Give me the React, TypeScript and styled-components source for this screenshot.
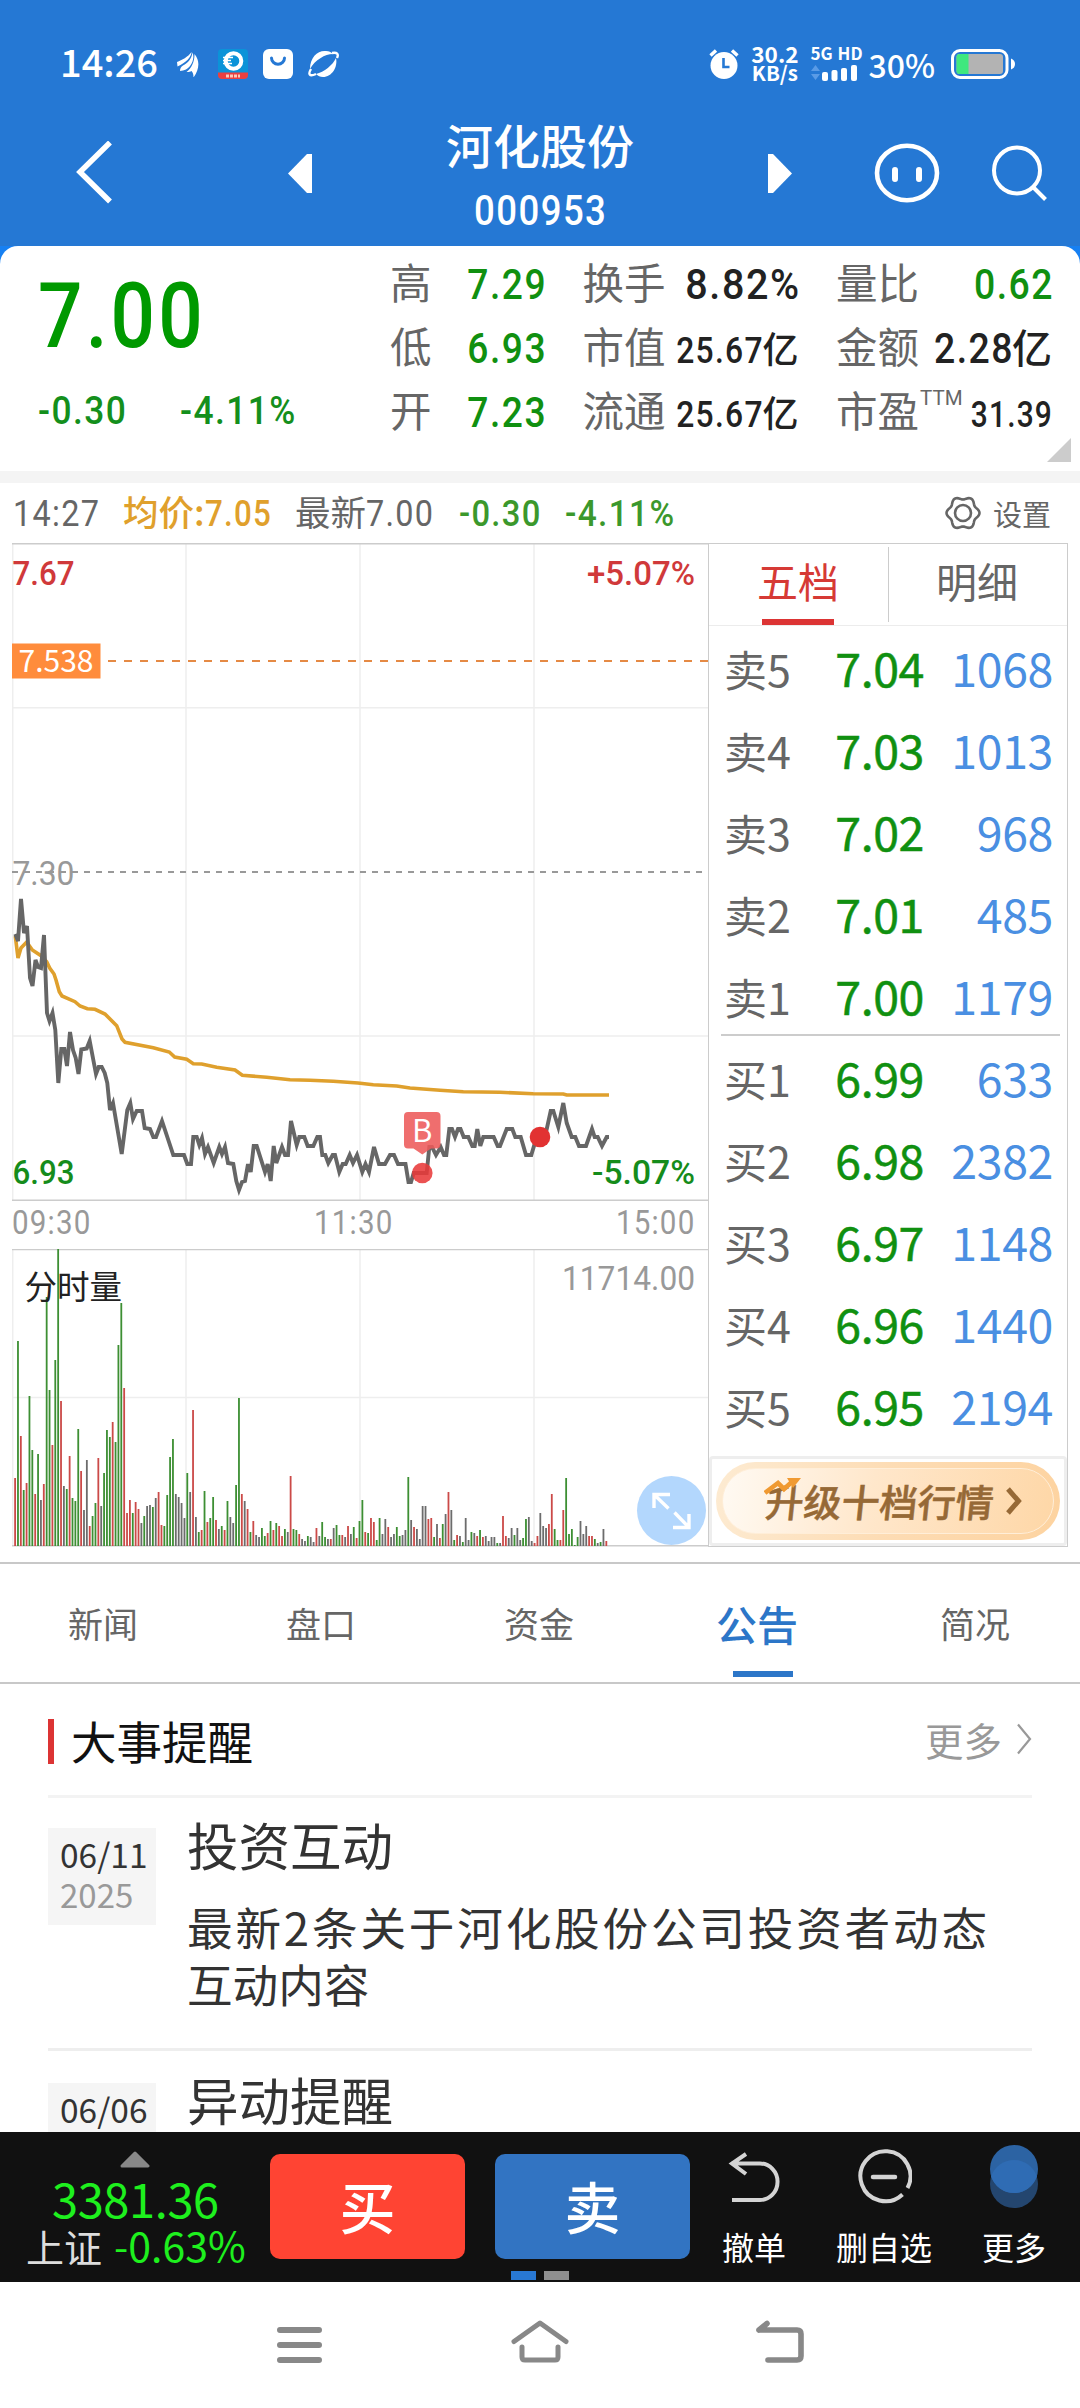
import React from "react";
import styled, { createGlobalStyle, css } from "styled-components";

const CJK = `"Noto Sans CJK SC", "Noto Sans", sans-serif`;
const DIN = `Roboto, "Noto Sans CJK SC", sans-serif`;

const c = {
  blue: "#2578d4",
  green: "#109010",
  red: "#d63a35",
  gray: "#666",
  light: "#999",
  line: "#cccccc",
  ink: "#222",
};

const GlobalStyle = createGlobalStyle`
  * { box-sizing: border-box; }
  html, body { margin: 0; padding: 0; background: #fff; }
  body { font-family: ${CJK}; color: ${c.ink}; width: 1080px; overflow: hidden; }
  svg { display: block; flex: none; }
`;

const Screen = styled.div`
  width: 1080px;
  height: 2408px;
  display: flex;
  flex-direction: column;
  overflow: hidden;
  background: #fff;
`;

/* Narrow DIN-like figures */
const Num = styled.span<{ $size: number; $from?: "left" | "right" | "center"; $w?: number; $k?: number }>`
  display: inline-block;
  font-family: ${DIN};
  font-size: ${(p) => p.$size}px;
  font-weight: ${(p) => p.$w ?? 500};
  letter-spacing: 0.04em;
  margin-right: -0.04em;
  margin-left: ${(p) => (p.$from === "right" ? "-0.3em" : 0)};
  white-space: nowrap;
  transform: scaleX(${(p) => p.$k ?? 0.87});
  transform-origin: ${(p) => p.$from ?? "left"} center;
`;

/* ---------- header ---------- */

const Header = styled.header`
  height: 246px;
  flex: none;
  background: ${c.blue};
  color: #fff;
`;

const StatusBar = styled.div`
  height: 92px;
  padding: 36px 64px 0 60px;
  display: flex;
  align-items: center;
  justify-content: space-between;
`;

const StatusGroup = styled.div<{ $gap: number }>`
  display: flex;
  align-items: center;
  gap: ${(p) => p.$gap}px;
`;

const Clock = styled.span`
  font-size: 38px;
  font-weight: 500;
  line-height: 50px;
  width: 102px;
  margin-top: -6px;
`;

const Speed = styled.div`
  display: flex;
  flex-direction: column;
  align-items: center;
  font-weight: 700;
  font-size: 22.5px;
  line-height: 19px;
  margin-top: -2px;
  span + span { font-size: 20.5px; }
`;

const Network = styled.div`
  display: flex;
  flex-direction: column;
  gap: 4px;
  font-size: 17px;
  font-weight: 700;
  line-height: 15px;
  word-spacing: 1px;
  white-space: nowrap;
  width: 48px;
  margin-top: -2px;
`;

const Percent = styled.span`
  font-size: 32px;
  font-weight: 500;
  line-height: 40px;
  margin: 0 16px 0 -2px;
`;

const TitleBar = styled.nav`
  height: 154px;
  padding: 8px 33px 0 76px;
  display: flex;
  align-items: center;
`;

const Title = styled.div`
  width: 456px;
  align-self: flex-start;
  margin-top: 14px;
  display: flex;
  flex-direction: column;
  align-items: center;
  gap: 12px;
`;

const StockName = styled.h1`
  margin: 0;
  font-size: 47px;
  font-weight: 500;
  line-height: 60px;
`;

const Code = styled.div`
  line-height: 50px;
`;

const Space = styled.i<{ $w: number }>`
  flex: none;
  width: ${(p) => p.$w}px;
`;

/* ---------- quote ---------- */

const QuoteBack = styled.div`
  background: #1780f2;
  flex: none;
`;

const Quote = styled.section`
  position: relative;
  height: 225px;
  background: #fff;
  border-radius: 18px 18px 0 0;
  display: flex;
`;

const PriceBlock = styled.div`
  width: 390px;
  flex: none;
  padding: 21px 0 0 38px;
  color: #009900;
`;

const Price = styled.div`
  line-height: 100px;
  height: 100px;
`;

const Change = styled.div`
  margin-top: 19px;
  line-height: 50px;
  display: grid;
  grid-template-columns: 142px 160px;
  color: #148f1c;
`;

const Stats = styled.div`
  padding-top: 3px;
  display: grid;
  grid-template-columns: 155px 216px 216px;
  grid-auto-rows: 64px;
  column-gap: 37.5px;
`;

const Stat = styled.div<{ $tone?: string }>`
  display: flex;
  justify-content: space-between;
  align-items: baseline;
  line-height: 64px;
  white-space: nowrap;
  color: ${(p) => p.$tone ?? c.ink};
`;

const StatLabel = styled.span`
  font-size: 41.5px;
  color: ${c.gray};
`;

const Sup = styled.sup`
  font-family: ${DIN};
  font-size: 20.5px;
  line-height: 1;
  vertical-align: 22px;
  margin-left: 1px;
`;

const StatValue = styled.span<{ $unit?: number }>`
  font-size: ${(p) => p.$unit ?? 40}px;
  font-weight: 500;
`;

const Corner = styled.i`
  position: absolute;
  right: 9px;
  bottom: 9px;
  border: 12px solid transparent;
  border-right-color: #ccc;
  border-bottom-color: #ccc;
`;

const Band = styled.div`
  height: 12px;
  flex: none;
  background: #f4f4f4;
`;

/* ---------- info line ---------- */

const Info = styled.div`
  height: 60px;
  flex: none;
  padding: 0 29px 0 13px;
  display: grid;
  grid-template-columns: 110px 172px 164px 106px 380px 1fr;
  line-height: 55px;
  font-size: 35.5px;
  white-space: nowrap;
  color: ${c.gray};
`;

const InfoCell = styled.span<{ $tone?: string; $bold?: boolean }>`
  color: ${(p) => p.$tone ?? "inherit"};
  font-weight: ${(p) => (p.$bold ? 500 : 400)};
`;

const Settings = styled.span`
  display: flex;
  align-items: center;
  justify-content: space-between;
  height: 60px;
  font-size: 29px;
  line-height: 56px;
`;

/* ---------- market ---------- */

const Market = styled.section`
  flex: none;
  height: 1019px;
  padding-left: 12px;
  display: flex;
  align-items: flex-start;
`;

const Charts = styled.div`
  position: relative;
  width: 696px;
  flex: none;
`;

const TimeAxis = styled.div`
  height: 48px;
  padding: 0 14px 0 0;
  display: grid;
  grid-template-columns: 1fr 1fr 1fr;
  line-height: 42px;
  color: ${c.light};
  span:nth-child(2) { text-align: center; }
  span:nth-child(3) { text-align: right; }
`;

const Expand = styled.button`
  position: absolute;
  right: 2px;
  bottom: 2px;
  width: 69px;
  height: 69px;
  padding: 0;
  border: 0;
  border-radius: 50%;
  background: #b3d7fd;
`;

const Book = styled.aside`
  width: 360px;
  height: 1004px;
  border: 1px solid ${c.line};
  display: flex;
  flex-direction: column;
`;

const BookTabs = styled.div`
  height: 82px;
  flex: none;
  display: grid;
  grid-template-columns: 180px 178px;
  border-bottom: 1px solid #ececec;
`;

const BookTab = styled.div<{ $active?: boolean }>`
  position: relative;
  display: flex;
  justify-content: center;
  font-size: 41px;
  line-height: 73px;
  padding-right: 2px;
  color: ${(p) => (p.$active ? c.red : c.gray)};
  ${(p) =>
    p.$active &&
    css`
      &::before {
        content: "";
        position: absolute;
        left: 53px;
        bottom: 0;
        width: 72px;
        height: 6px;
        background: #dc3434;
      }
      &::after {
        content: "";
        position: absolute;
        right: 0;
        top: 3px;
        width: 1px;
        height: 75px;
        background: ${c.line};
      }
    `}
`;

const Level = styled.div`
  height: 82px;
  padding: 0 14px 0 15px;
  display: grid;
  grid-template-columns: 70px 130px 1fr;
  align-items: baseline;
  line-height: 82px;
  font-size: 43px;
  color: ${c.gray};
`;

const LevelNum = styled.span<{ $tone: string; $bold?: boolean }>`
  text-align: right;
  font-size: 46.5px;
  font-weight: 400;
  letter-spacing: -0.4px;
  color: ${(p) => p.$tone};
  -webkit-text-stroke: ${(p) => (p.$bold ? "0.5px currentColor" : "0")};
`;

const Side = styled.div`
  position: relative;
  & + &::before {
    content: "";
    position: absolute;
    left: 12px;
    right: 7px;
    top: -2px;
    height: 2px;
    background: ${c.line};
  }
`;

const UpgradeBox = styled.div`
  margin-top: auto;
  height: 90px;
  border: 3px solid #eeeeee;
  border-radius: 4px;
  padding: 3px 4px 3px 4px;
`;

const Upgrade = styled.div`
  position: relative;
  height: 78px;
  border-radius: 39px;
  background: linear-gradient(100deg, #fdebd2, #fddcb4 50%, #fdd3a0);
  padding: 6px;
`;

const UpgradeInner = styled.div`
  height: 66px;
  border: 1.5px solid #ffeed8;
  border-radius: 33px;
  background: linear-gradient(100deg, #fffaf3, #ffe7cb 45%, #fed7a7);
  display: flex;
  align-items: center;
  padding-left: 43px;
  gap: 12px;
  color: #966936;
`;

const UpgradeText = styled.span`
  font-size: 38px;
  font-weight: 500;
  -webkit-text-stroke: 0.5px currentColor;
  line-height: 60px;
  margin-top: 0;
  transform: skewX(-6deg);
`;

const Spark = styled.svg`
  position: absolute;
  left: 48px;
  top: 15px;
`;

/* ---------- tabs ---------- */

const Tabs = styled.nav`
  flex: none;
  height: 122px;
  border-top: 2px solid #c8c8c8;
  border-bottom: 2px solid #c8c8c8;
  display: grid;
  grid-template-columns: repeat(5, 218px);
  margin-left: -6px;
`;

const Tab = styled.div<{ $active?: boolean }>`
  position: relative;
  text-align: center;
  font-size: ${(p) => (p.$active ? 41 : 35)}px;
  font-weight: ${(p) => (p.$active ? 500 : 400)};
  line-height: 118px;
  color: ${(p) => (p.$active ? "#2c76c8" : c.gray)};
  ${(p) =>
    p.$active &&
    css`
      &::after {
        content: "";
        position: absolute;
        left: 85px;
        bottom: 5px;
        width: 60px;
        height: 6px;
        background: #2c76c8;
      }
    `}
`;

/* ---------- notices ---------- */

const Notices = styled.section`
  flex: none;
  height: 448px;
  overflow: hidden;
  padding: 0 48px;
`;

const NoticeHead = styled.div`
  height: 114px;
  border-bottom: 3px solid #f3f3f3;
  display: flex;
  align-items: center;
`;

const RedBar = styled.i`
  width: 6px;
  height: 45px;
  margin-top: 4px;
  background: #dc3434;
`;

const HeadTitle = styled.h2`
  margin: 0 auto 0 17px;
  font-size: 45.5px;
  font-weight: 400;
  line-height: 110px;
  color: #111;
`;

const More = styled.span`
  display: flex;
  align-items: center;
  gap: 14px;
  font-size: 38.5px;
  line-height: 108px;
  margin-top: -2px;
  color: ${c.light};
`;

const Notice = styled.article`
  height: 252px;
  padding-top: 30px;
  display: flex;
  & + & {
    border-top: 3px solid #eeeeee;
    height: 255px;
    padding-top: 32px;
    margin-top: -2px;
  }
`;

const DateBox = styled.div`
  width: 108px;
  height: 97px;
  flex: none;
  padding: 5px 0 0 12px;
  background: #f5f5f5;
  font-size: 33.5px;
  line-height: 41px;
  color: #333;
  white-space: nowrap;
`;

const Year = styled.div`
  font-size: 33px;
  line-height: 40px;
  color: ${c.light};
`;

const NoticeBody = styled.div`
  margin-left: 31px;
  width: 800px;
  color: #333;
`;

const NoticeTitle = styled.h3`
  margin: -14px 0 0;
  font-size: 51.5px;
  font-weight: 400;
  line-height: 60px;
`;

const NoticeText = styled.p`
  margin: 24px 0 0;
  font-size: 45.6px;
  line-height: 56.5px;
  text-align: justify;
`;

/* ---------- trade bar ---------- */

const TradeBar = styled.footer`
  position: relative;
  flex: none;
  height: 150px;
  background: #111;
  display: flex;
`;

const Index = styled.div`
  width: 270px;
  padding: 19px 0 0 26px;
  white-space: nowrap;
  svg { margin-left: 94px; }
`;

const IndexValue = styled.div`
  margin: 5px 0 0 26px;
  font-size: 47px;
  line-height: 50px;
  height: 50px;
  letter-spacing: -0.4px;
  color: #1ef01e;
`;

const IndexChange = styled.div`
  display: flex;
  align-items: baseline;
  font-size: 38px;
  line-height: 42px;
  color: #ddd;
  b {
    margin-left: 12px;
    font-size: 41px;
    font-weight: 400;
    color: #1ef01e;
  }
`;

const TradeButton = styled.button<{ $bg: string }>`
  width: 195px;
  height: 105px;
  margin: 22px 30px 0 0;
  padding: 0 0 4px;
  border: 0;
  border-radius: 10px;
  background: ${(p) => p.$bg};
  color: #fff;
  font: 500 56px/96px ${CJK};
`;

const Actions = styled.div`
  display: grid;
  grid-template-columns: 130px 130px 130px;
  margin-left: -31px;
`;

const Action = styled.div`
  padding-top: 12px;
  display: flex;
  flex-direction: column;
  align-items: center;
  font-size: 32px;
  line-height: 44px;
  color: #fff;
  span { margin-top: 15px; }
`;

const Pager = styled.div`
  position: absolute;
  left: 511px;
  bottom: 2px;
  display: flex;
  gap: 8px;
  i { width: 25px; height: 9px; background: #8f8f8f; }
  i:first-child { background: #2878d4; }
`;

const SystemNav = styled.div`
  flex: 1;
  display: flex;
  justify-content: center;
  align-items: flex-start;
  padding-top: 34px;
  gap: 176px;
`;

/* ---------- data ---------- */

const pricePoints =
  "15.3,934 18,941 21,899 24,933 27,926 30,978 32.5,986 35.5,960 38,967 41,968 44,935 47,1013 49.5,1021 52.5,1013 55.3,1030 58.3,1083 61.3,1049 64.3,1049 67,1066 70,1032 73,1050 75.7,1058 78.5,1074 81.3,1049.5 86.7,1048.5 89.7,1041 96,1074 98.7,1067 101.7,1067 104.7,1073 107.3,1083 110,1110 113,1103 121.7,1154 127.3,1110 130.3,1103 133,1119 136.7,1111 142,1111 144.7,1128 150,1129 153.3,1137 156,1137 162,1121 173.3,1155 184,1155 187.3,1164 191,1164 193.3,1137 196.7,1137 199.3,1145 202,1138 205,1154 208,1147 213.7,1163 219.3,1147 222,1154 225,1147 228,1163 233.3,1164 236.3,1181 239,1190 242,1182 245,1181 248,1164 250.7,1172 253.7,1146 256.7,1146 265,1172 267.7,1164 270.7,1181 273.7,1146 276.3,1163 282,1147 285,1155 288,1155 291,1121 296.7,1145 299.3,1137 304.3,1137 307.7,1146 313.3,1146 317.3,1137 320,1137 322.3,1155 325.3,1155 328.3,1163 332.7,1155 335,1155 339.3,1172 342.7,1164 345.7,1164 349.7,1155 353,1163 357,1155 362.3,1172 365.5,1164 369,1172 374,1147 379,1164 385,1164 390,1155 394,1155 398,1164 405.5,1164 408.5,1182 411,1182 413.7,1173 426.7,1173 429.3,1147 432,1147 436,1155 440.7,1147 444,1155 446.3,1155 449.3,1129 452,1129 455,1137 458,1129 460.5,1129 463.7,1137 468.3,1137 472.3,1146 474.7,1146 477.3,1129 480.3,1146 483.3,1137 493.7,1137 497.7,1146 500,1146 506.7,1129 512.3,1129 515.3,1137 520.7,1137 526,1155 531.3,1155 536.7,1137 545,1137 550.7,1111 553.3,1111 558.3,1127 563.3,1103 566.7,1123 571.7,1137 575.3,1137 579,1146 586,1146 592,1129 594.7,1137 597.7,1137 602,1146 606.7,1137 609,1137";

const averagePoints =
  "15.3,936 18,958 21,948 26.7,942 32.3,950 41,955.7 46.7,961.7 49.7,968 54,974 56,980 59.3,991.7 62,996 75,1001.7 80,1006 87.3,1008.7 95,1009.3 105,1014 116.7,1025.7 122,1039 125,1042.3 153.3,1047.7 169.3,1052 174.7,1057 186.7,1059.3 193.3,1063.7 201.7,1064 216.7,1067.3 235,1070 242.3,1075.3 266.7,1077.3 290,1079.7 310,1080.3 333.3,1081.3 358,1083 373.3,1084.7 396.7,1086 410,1088 440,1090.3 463.3,1091.7 500,1092.3 533.3,1093.7 563.3,1094 566.7,1095 609,1095";

/* Traded volume per minute: side and bar height (px) */
const volume = (
  "r68 g205 r110 g56 r63 g150 g96 r52 g92 k46 r62 g249 g156 r101 g186 g297 r145 k60 g57 r90 g48 g45 g117 r75 k36 k86 r20 g30 g43 r88 k40 g73 g116 g109 r124 g104 g201 g243 r158 r33 r46 g33 r44 r37 k23 g30 k40 k41 g39 k48 r54 r21 g20 g51 g89 g107 k52 k49 k43 k28 g73 k54 r136 k29 g14 r16 g55 r24 g28 g49 r26 k17 g20 r16 g45 k29 k23 g61 g148 " +
  "r52 k45 r37 g14 r25 k11 k9 g18 g10 r13 g25 r16 g23 r20 r10 g17 k14 r70 g17 g16 r12 k7 k5 g10 k9 k4 r18 k10 g24 g9 k7 r7 k18 g21 g11 r11 k9 r20 k12 g19 r8 g25 g46 r14 g13 r28 r24 g6 g28 k12 k27 r19 k9 k12 g19 g10 k11 k16 g69 k26 r19 k17 k7 k40 k40 r27 r28 g9 k22 r8 g22 k32 r54 k36 g6 r11 k10 g4 k28 k6 g14 k13 r10 g16 r9 k10 k5 k9 k9 g3 k3 r30 r10 k8 k18 g11 k18 k6 g8 g27 k29 k5 r3 r10 k33 k20 k18 r22 r52 g17 g6 r6 r36 g68 g12 g17 g1 g9 k25 k12 k20 r10 r10 g7 k3 g4 k17 r5"
).split(" ");

const barTone: Record<string, string> = { r: "#cb4a48", g: "#3d8f33", k: "#6c6c6c" };

type StatItem = {
  label: string;
  value: string;
  size: number;
  k?: number;
  tone?: string;
  unit?: string;
  sup?: string;
};
const stats: StatItem[] = [
  { label: "高", value: "7.29", size: 42, k: 0.885, tone: c.green },
  { label: "换手", value: "8.82%", size: 42, k: 0.94 },
  { label: "量比", value: "0.62", size: 42, k: 0.89, tone: c.green },
  { label: "低", value: "6.93", size: 42, k: 0.885, tone: c.green },
  { label: "市值", value: "25.67", size: 37, k: 0.86, unit: "亿" },
  { label: "金额", value: "2.28", size: 42, k: 0.89, unit: "亿" },
  { label: "开", value: "7.23", size: 42, k: 0.885, tone: c.green },
  { label: "流通", value: "25.67", size: 37, k: 0.86, unit: "亿" },
  { label: "市盈", value: "31.39", size: 36, k: 0.83, sup: "TTM" },
];

const asks = [
  ["卖5", "7.04", "1068"],
  ["卖4", "7.03", "1013"],
  ["卖3", "7.02", "968"],
  ["卖2", "7.01", "485"],
  ["卖1", "7.00", "1179"],
];
const bids = [
  ["买1", "6.99", "633"],
  ["买2", "6.98", "2382"],
  ["买3", "6.97", "1148"],
  ["买4", "6.96", "1440"],
  ["买5", "6.95", "2194"],
];

/* ---------- parts ---------- */

const ChartText = styled.text<{ $w: number }>`
  font-family: ${DIN};
  font-size: 34px;
  font-weight: ${(p) => p.$w};
`;

function ChartLabel(p: { x: number; y: number; w: number; fill: string; children: string; weight?: number }) {
  return (
    <ChartText x={p.x} y={p.y} textLength={p.w} lengthAdjust="spacingAndGlyphs" fill={p.fill} $w={p.weight ?? 500}>
      {p.children}
    </ChartText>
  );
}

function PriceChart() {
  return (
    <svg width="696" height="658" viewBox="12 543 696 658">
      <g stroke="#eeeeee" strokeWidth="1.5">
        <path d="M12.7 543V1200M186 543V1200M360 543V1200M534 543V1200M12 707.7H708M12 1036H708" />
      </g>
      <path d="M12 543.7H708M12 1200.2H708" stroke={c.line} strokeWidth="1.4" />
      <path d="M12 872H704" stroke="#999" strokeWidth="1.8" strokeDasharray="6 6" />
      <path d="M108 661H708" stroke="#e58a45" strokeWidth="2" strokeDasharray="8 8" />
      <rect x="12" y="643.5" width="88.5" height="35" fill="#ff8c3c" />
      <text x="18.5" y="671.5" fontFamily={CJK} fontSize="30" fill="#fff" textLength="75" lengthAdjust="spacingAndGlyphs">
        7.538
      </text>
      <ChartLabel x={12.5} y={584.5} w={62} fill="#d0393a">7.67</ChartLabel>
      <ChartLabel x={587} y={584.5} w={108} fill="#d0393a">+5.07%</ChartLabel>
      <ChartLabel x={12.5} y={884.5} w={62} fill="#999" weight={400}>7.30</ChartLabel>
      <ChartLabel x={12.5} y={1184} w={62} fill="#158c1b">6.93</ChartLabel>
      <ChartLabel x={592} y={1184} w={103} fill="#158c1b">-5.07%</ChartLabel>
      <polyline points={averagePoints} fill="none" stroke="#dfa02d" strokeWidth="3.6" />
      <polyline points={pricePoints} fill="none" stroke="#666" strokeWidth="3.9" />
      <circle cx="422.3" cy="1173" r="10.3" fill="#e83a3a" opacity=".88" />
      <path d="M408 1112H436.500Q440.500 1112 440.500 1116V1144.500Q440.500 1148.500 436.500 1148.500H431L422.300 1154.500L413.500 1148.500H408Q404 1148.500 404 1144.500V1116Q404 1112 408 1112Z" fill="#ed5a5a" opacity=".88" />
      <text x="422.3" y="1142" fontFamily={CJK} fontSize="31" fill="#fff" textAnchor="middle">
        B
      </text>
      <circle cx="540" cy="1137" r="10.3" fill="#e23232" />
    </svg>
  );
}

function VolumeChart() {
  return (
    <svg width="696" height="298" viewBox="12 1249 696 298">
      <path d="M12.700 1249V1546M186 1249V1546M360 1249V1546M534 1249V1546M12 1397.500H708" stroke="#eeeeee" strokeWidth="1.5" />
      <path d="M12 1249.600H708M12 1545.800H708" stroke={c.line} strokeWidth="1.4" />
      {volume.map((v, i) => {
        const h = Number(v.slice(1));
        return <rect key={i} x={14.2 + i * 2.87} y={1546 - h} width={1.8} height={h} fill={barTone[v[0]]} />;
      })}
      <text x="24.500" y="1299" fontFamily={CJK} fontSize="32.500" fill="#222">
        分时量
      </text>
      <ChartLabel x={562} y={1290} w={133} fill="#999" weight={400}>11714.00</ChartLabel>
    </svg>
  );
}

const Levels = ({ rows }: { rows: string[][] }) => (
  <Side>
    {rows.map(([label, price, qty]) => (
      <Level key={label}>
        <span>{label}</span>
        <LevelNum $tone={c.green} $bold>
          {price}
        </LevelNum>
        <LevelNum $tone="#4a8fe2">{qty}</LevelNum>
      </Level>
    ))}
  </Side>
);

function Status() {
  return (
    <StatusBar>
      <StatusGroup $gap={15}>
        <Clock>14:26</Clock>
        <svg width="26" height="25" viewBox="0 0 26 25" fill="#fff">
          <path d="M0 10C5 8 11 5 14.500 0C14.500 5 9 10.500 0.500 14.500Z" />
          <path d="M3 19C3 16.500 4 14.500 6 13.500C11 11 14.500 7 15.500 0.500C18 6 15 14 9 17.500C7 18.500 5 18.500 3 19Z" />
          <path d="M9.500 20C14.500 16 17.500 10 17.500 2C23.500 9 22 18 16.500 25.500C16.500 22.500 16 20.500 14.500 19C13 20 11 20.200 9.500 20Z" />
        </svg>
        <svg width="30" height="30" viewBox="0 0 30 30">
          <defs>
            <clipPath id="app">
              <rect width="30" height="30" rx="4" />
            </clipPath>
          </defs>
          <g clipPath="url(#app)">
            <rect width="30" height="30" fill="#0b93d8" />
            <rect y="23.500" width="30" height="7" fill="#ea3f3f" />
            <circle cx="15.500" cy="12" r="7.800" fill="none" stroke="#fff" strokeWidth="4" />
            <path d="M5 8.500H15M5 11.500H13M5 14.500H14" stroke="#fff" strokeWidth="1.300" />
            <path d="M8 27H22" stroke="#ffc9b8" strokeWidth="3" strokeDasharray="3 1" />
          </g>
        </svg>
        <svg width="30" height="30" viewBox="0 0 30 30">
          <rect width="30" height="30" rx="6" fill="#fff" />
          <path d="M8.500 9A6.300 6 0 0 0 21.500 9" fill="none" stroke={c.blue} strokeWidth="3" strokeLinecap="round" />
        </svg>
        <svg width="31" height="28" viewBox="0 0 31 28">
          <path d="M2 19C2 7 10 0 18 1C21 1 23 2 25 4C17 4 7 10 2 19Z" fill="#fff" />
          <path d="M8 24C16 22 25 15 28 8C30 17 24 27 15 27C12 27 10 26 8 24Z" fill="#fff" />
          <path d="M24 3C29 2 31 4 29 8M3 19C0 24 1 27 8 24" fill="none" stroke="#fff" strokeWidth="2.400" />
        </svg>
      </StatusGroup>
      <StatusGroup $gap={12}>
        <svg width="30" height="30" viewBox="0 0 30 30">
          <circle cx="15" cy="16.500" r="13.500" fill="#fff" />
          <path d="M1.500 6.500L7 1.500M28.500 6.500L23 1.500" stroke="#fff" strokeWidth="3.400" />
          <path d="M14.500 9V18H20.500" fill="none" stroke={c.blue} strokeWidth="2.600" />
        </svg>
        <Speed>
          <span>30.2</span>
          <span>KB/s</span>
        </Speed>
        <Network>
          <span>5G HD</span>
          <svg width="48" height="17" viewBox="0 0 48 17">
            <path d="M1 7L5.500 1L10 7ZM1 10L5.500 16L10 10Z" fill="#5a9be6" />
            <g fill="#fff">
              <rect x="12" y="8" width="6" height="9" rx="2" />
              <rect x="21.500" y="6" width="6" height="11" rx="2" />
              <rect x="31" y="4" width="6" height="13" rx="2" />
              <rect x="41" y="1" width="6" height="16" rx="2" />
            </g>
          </svg>
        </Network>
        <StatusGroup $gap={0}>
          <Percent>30%</Percent>
          <svg width="65" height="30" viewBox="0 0 65 30">
            <rect x="1.500" y="1.500" width="54.500" height="27" rx="7.500" fill="none" stroke="#fff" strokeWidth="3" />
            <rect x="5.500" y="5" width="46.500" height="20" rx="3" fill="#b3b3b3" />
            <path d="M8.500 5H17.500V25H8.500Q5.500 25 5.500 22V8Q5.500 5 8.500 5Z" fill="#3fe87e" />
            <path d="M60 9.500Q64 11 64 15T60 20.500Z" fill="#fff" />
          </svg>
        </StatusGroup>
      </StatusGroup>
    </StatusBar>
  );
}

/* Six-lobed gear outline centred in a 36px box */
function gearPath() {
  const pts: string[] = [];
  for (let i = 0; i <= 84; i++) {
    const a = (i / 84) * Math.PI * 2;
    const r = 15 - 1.5 * Math.cos(6 * a);
    pts.push(`${(18 + r * Math.sin(a)).toFixed(2)},${(18 - r * Math.cos(a)).toFixed(2)}`);
  }
  return `M${pts.join("L")}Z`;
}

export default function App() {
  return (
    <Screen>
      <GlobalStyle />
      <Header>
        <Status />
        <TitleBar>
          <svg width="36" height="64" viewBox="0 0 36 64">
            <path d="M34 1.500L4 31L34 60.500" fill="none" stroke="#fff" strokeWidth="5.500" />
          </svg>
          <Space $w={176} />
          <svg width="24" height="39" viewBox="0 0 24 39">
            <path d="M24 0V39H19L0 19.500L19 0Z" fill="#fff" />
          </svg>
          <Title>
            <StockName>河化股份</StockName>
            <Code>
              <Num $size={42} $from="center">
                000953
              </Num>
            </Code>
          </Title>
          <svg width="24" height="39" viewBox="0 0 24 39">
            <path d="M0 0V39H5L24 19.500L5 0Z" fill="#fff" />
          </svg>
          <Space $w={82} />
          <svg width="66" height="60" viewBox="0 0 66 60">
            <ellipse cx="33" cy="30" rx="30" ry="27.300" fill="none" stroke="#fff" strokeWidth="4.600" />
            <path d="M21 27V36M45 27V36" stroke="#fff" strokeWidth="6" strokeLinecap="round" />
          </svg>
          <Space $w={51} />
          <svg width="56" height="56" viewBox="0 0 56 56">
            <circle cx="26" cy="25.500" r="23" fill="none" stroke="#fff" strokeWidth="4" />
            <path d="M42 42L54.500 54.500" stroke="#fff" strokeWidth="4" />
          </svg>
        </TitleBar>
      </Header>

      <QuoteBack>
        <Quote>
          <PriceBlock>
            <Price>
              <Num $size={90}>7.00</Num>
            </Price>
            <Change>
              <Num $size={38} $k={0.93}>
                -0.30
              </Num>
              <Num $size={38} $k={0.93}>
                -4.11%
              </Num>
            </Change>
          </PriceBlock>
          <Stats>
            {stats.map(({ label, value, size, k, tone, unit, sup }) => (
              <Stat key={label} $tone={tone}>
                <StatLabel>
                  {label}
                  {sup && <Sup>{sup}</Sup>}
                </StatLabel>
                <StatValue $unit={size === 37 ? 36 : 40}>
                  <Num $size={size} $k={k} $from="right">
                    {value}
                  </Num>
                  {unit}
                </StatValue>
              </Stat>
            ))}
          </Stats>
          <Corner />
        </Quote>
      </QuoteBack>
      <Band />

      <Info>
        <InfoCell>
          <Num $size={36} $w={400} $k={0.9}>14:27</Num>
        </InfoCell>
        <InfoCell $tone="#e0a02c" $bold>
          均价:<Num $size={36}>7.05</Num>
        </InfoCell>
        <InfoCell>
          最新<Num $size={36} $w={400} $k={0.9}>7.00</Num>
        </InfoCell>
        <InfoCell $tone="#3b982c">
          <Num $size={36} $k={0.91}>-0.30</Num>
        </InfoCell>
        <InfoCell $tone="#3b982c">
          <Num $size={36} $k={0.93}>-4.11%</Num>
        </InfoCell>
        <Settings>
          <svg width="36" height="36" viewBox="0 0 36 36" fill="none" stroke="#666" strokeWidth="2.600">
            <path d={gearPath()} />
            <circle cx="18" cy="18" r="8" />
          </svg>
          设置
        </Settings>
      </Info>

      <Market>
        <Charts>
          <PriceChart />
          <TimeAxis>
            <span>
              <Num $size={34} $w={400}>09:30</Num>
            </span>
            <span>
              <Num $size={34} $w={400} $from="center">11:30</Num>
            </span>
            <span>
              <Num $size={34} $w={400} $from="right">15:00</Num>
            </span>
          </TimeAxis>
          <VolumeChart />
          <Expand>
            <svg width="69" height="69" viewBox="0 0 69 69" fill="none" stroke="#fff" strokeWidth="3.400">
              <path d="M17 32V18.500H33M18 19.500L31.500 32.500M52 38V51.500H36M51 50.500L37.500 36.500" />
            </svg>
          </Expand>
        </Charts>
        <Book>
          <BookTabs>
            <BookTab $active>五档</BookTab>
            <BookTab>明细</BookTab>
          </BookTabs>
          <Levels rows={asks} />
          <Levels rows={bids} />
          <UpgradeBox>
            <Upgrade>
              <UpgradeInner>
                <UpgradeText>升级十档行情</UpgradeText>
                <svg width="16" height="28" viewBox="0 0 16 28">
                  <path d="M2 2L12.500 14L2 26" fill="none" stroke="#966936" strokeWidth="5" />
                </svg>
              </UpgradeInner>
              <Spark width="38" height="18" viewBox="0 0 38 18">
                <path d="M1 16L14 6L20 12L30 3" fill="none" stroke="#f09a32" strokeWidth="4.600" />
                <path d="M23 1H37L29 11Z" fill="#f09a32" />
              </Spark>
            </Upgrade>
          </UpgradeBox>
        </Book>
      </Market>

      <Tabs>
        <Tab>新闻</Tab>
        <Tab>盘口</Tab>
        <Tab>资金</Tab>
        <Tab $active>公告</Tab>
        <Tab>简况</Tab>
      </Tabs>

      <Notices>
        <NoticeHead>
          <RedBar />
          <HeadTitle>大事提醒</HeadTitle>
          <More>
            更多
            <svg width="16" height="32" viewBox="0 0 16 32">
              <path d="M2 1.500L14 16L2 30.500" fill="none" stroke="#999" strokeWidth="2.200" />
            </svg>
          </More>
        </NoticeHead>
        <Notice>
          <DateBox>
            06/11
            <Year>2025</Year>
          </DateBox>
          <NoticeBody>
            <NoticeTitle>投资互动</NoticeTitle>
            <NoticeText>最新2条关于河化股份公司投资者动态互动内容</NoticeText>
          </NoticeBody>
        </Notice>
        <Notice>
          <DateBox>06/06</DateBox>
          <NoticeBody>
            <NoticeTitle>异动提醒</NoticeTitle>
          </NoticeBody>
        </Notice>
      </Notices>

      <TradeBar>
        <Index>
          <svg width="30" height="17" viewBox="0 0 30 17">
            <path d="M15 2L28 15H2Z" fill="#888" stroke="#888" strokeWidth="3" strokeLinejoin="round" />
          </svg>
          <IndexValue>3381.36</IndexValue>
          <IndexChange>
            上证<b>-0.63%</b>
          </IndexChange>
        </Index>
        <TradeButton $bg="#ff4433">买</TradeButton>
        <TradeButton $bg="#3274c2">卖</TradeButton>
        <Actions>
          <Action>
            <svg width="56" height="65" viewBox="0 0 56 65" fill="none" stroke="#d4d4d4" strokeWidth="4">
              <path d="M20 10L6 19.500L20 30M5 19.500H34A17.500 18.200 0 0 1 34 56H6" />
            </svg>
            <span>撤单</span>
          </Action>
          <Action>
            <svg width="56" height="65" viewBox="0 0 56 65" fill="none" stroke="#d4d4d4" strokeWidth="4">
              <path d="M51.500 44A25 25 0 1 0 46.500 50.500" />
              <path d="M17 33H39" strokeWidth="4.500" strokeLinecap="round" />
            </svg>
            <span>删自选</span>
          </Action>
          <Action>
            <svg width="56" height="65" viewBox="0 0 56 65">
              <circle cx="28" cy="40" r="24" fill="#24466f" />
              <circle cx="28" cy="25" r="24" fill="#2c63a3" />
              <path d="M5.200 32.500A24 24 0 0 1 50.800 32.500A24 24 0 0 1 5.200 32.500Z" fill="#2f6cb4" />
            </svg>
            <span>更多</span>
          </Action>
        </Actions>
        <Pager>
          <i />
          <i />
        </Pager>
      </TradeBar>

      <SystemNav>
        <svg width="60" height="50" viewBox="0 0 60 50" stroke="#888" strokeWidth="6" strokeLinecap="round">
          <path d="M6 14H45M6 29H45M6 44H45" />
        </svg>
        <svg width="60" height="50" viewBox="0 0 60 50" fill="none" stroke="#888" strokeWidth="5" strokeLinecap="round" strokeLinejoin="round">
          <path d="M4 25.500L30 7L56 25.500M12 31V41Q12 44 15 44H45Q48 44 48 41V31" />
        </svg>
        <svg width="60" height="50" viewBox="0 0 60 50" fill="none" stroke="#888" strokeWidth="5.600" strokeLinecap="round" strokeLinejoin="round">
          <path d="M13 14H51Q55 14 55 18V40Q55 44 51 44H22M13 14L21 7.500" />
        </svg>
      </SystemNav>
    </Screen>
  );
}
